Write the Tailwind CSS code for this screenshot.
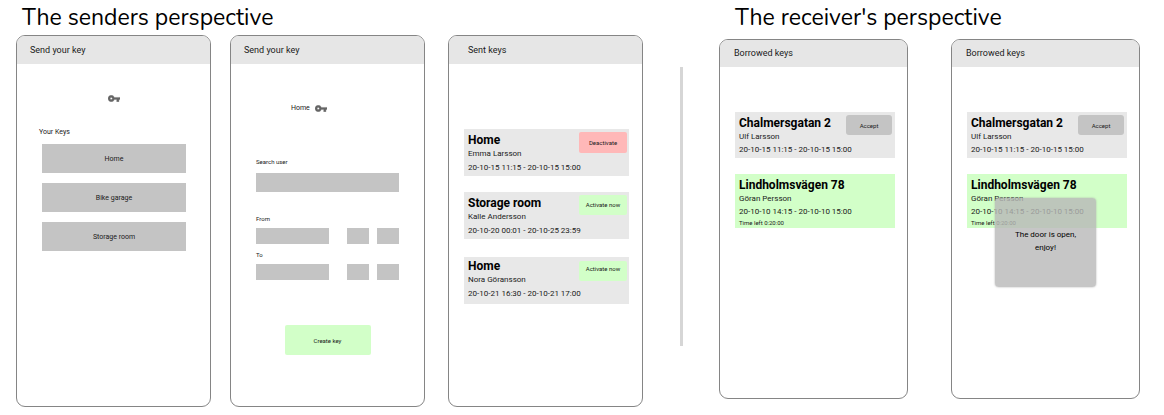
<!DOCTYPE html>
<html lang="en">
<head>
<meta charset="utf-8">
<meta name="viewport" content="width=device-width, initial-scale=1">
<title>Key sharing wireframes</title>
<script src="https://cdn.jsdelivr.net/npm/@tailwindcss/browser@4"></script>
</head>
<body class="bg-white font-['Roboto',sans-serif] text-[8px] text-[#1a1a1a]">
<svg class="hidden" aria-hidden="true"><symbol id="key" viewBox="1 6 22 12"><path fill="currentColor" stroke="currentColor" stroke-width=".6" d="M12.65 10A5.99 5.99 0 0 0 7 6c-3.31 0-6 2.69-6 6s2.69 6 6 6a5.99 5.99 0 0 0 5.65-4H17v4h4v-4h2v-4H12.65zM7 14c-1.1 0-2-.9-2-2s.9-2 2-2 2 .9 2 2-.9 2-2 2z"/></symbol></svg>
<main class="flex items-start pl-4 pr-6">

  <section class="min-w-0 flex-[627]">
    <h1 class="pl-[6px] font-['Nunito','Open_Sans',sans-serif] text-[23px] leading-[35px] text-black whitespace-nowrap">The senders perspective</h1>
    <div class="flex gap-[19px]">

      <article class="min-h-[372px] min-w-0 flex-1 overflow-hidden rounded-[9px] border border-[#858585]">
        <h2 class="bg-[#e6e6e6] pl-[13px] text-[9px] leading-[28px]">Send your key</h2>
        <div class="pt-[31px] pr-6 pl-[25px]">
          <svg class="mx-auto h-[7px] w-[12px] text-[#666]" aria-hidden="true"><use href="#key"/></svg>
          <h3 class="-ml-[3px] pt-[25px] text-[7px] leading-[10px]">Your Keys</h3>
          <div class="flex flex-col gap-[10px] pt-[7px]">
            <button class="h-[29px] bg-[#c4c4c4] pt-px text-[7px]">Home</button>
            <button class="h-[29px] bg-[#c4c4c4] pt-px text-[7px]">Bike garage</button>
            <button class="h-[29px] bg-[#c4c4c4] pt-px text-[7px]">Storage room</button>
          </div>
        </div>
      </article>

      <article class="min-h-[372px] min-w-0 flex-1 overflow-hidden rounded-[9px] border border-[#858585]">
        <h2 class="bg-[#e6e6e6] pl-[13px] text-[9px] leading-[28px]">Send your key</h2>
        <form class="px-[25px] pt-[39px]">
          <p class="flex items-center gap-[5px] pl-[35px] text-[7px] leading-[10px]">Home
            <svg class="h-[7px] w-[12px] text-[#666]" aria-hidden="true"><use href="#key"/></svg>
          </p>
          <label for="user" class="block pt-[44px] text-[6px] leading-[10px]">Search user</label>
          <input id="user" type="text" class="mt-[6px] block h-[19px] w-full bg-[#c4c4c4] px-1">
          <label for="from" class="block pt-[22px] text-[6px] leading-[10px]">From</label>
          <div class="mt-1 flex h-4">
            <input id="from" type="text" class="min-w-0 flex-1 bg-[#c4c4c4] px-1">
            <input type="text" aria-label="From hour" class="ml-[18px] w-[22px] bg-[#c4c4c4]">
            <input type="text" aria-label="From minute" class="ml-2 w-[22px] bg-[#c4c4c4]">
          </div>
          <label for="to" class="block pt-[6px] text-[6px] leading-[10px]">To</label>
          <div class="mt-1 flex h-4">
            <input id="to" type="text" class="min-w-0 flex-1 bg-[#c4c4c4] px-1">
            <input type="text" aria-label="To hour" class="ml-[18px] w-[22px] bg-[#c4c4c4]">
            <input type="text" aria-label="To minute" class="ml-2 w-[22px] bg-[#c4c4c4]">
          </div>
          <button type="button" class="mx-auto mt-[45px] block h-[30px] w-[86px] rounded-[2px] bg-[#d2ffc8] text-[6px]">Create key</button>
        </form>
      </article>

      <article class="ml-1 min-h-[372px] min-w-0 flex-1 overflow-hidden rounded-[9px] border border-[#858585]">
        <h2 class="bg-[#e6e6e6] pl-[19px] text-[9px] leading-[28px]">Sent keys</h2>
        <ul class="pt-[65px] pr-[13px] pl-[15px] leading-[14px] whitespace-nowrap">
          <li class="flex h-[47px] justify-between bg-[#e8e8e8] pr-[2px] pl-1">
            <div class="w-0 pt-1"><h3 class="text-[12px] leading-[14px] font-bold text-black">Home</h3><p>Emma Larsson</p><p>20-10-15 11:15 - 20-10-15 15:00</p></div>
            <button class="mt-[3px] h-[21px] w-12 rounded-[2px] bg-[#ffb8b8] text-[6px]">Deactivate</button>
          </li>
          <li class="mt-4 flex h-[47px] justify-between bg-[#e8e8e8] pr-[2px] pl-1">
            <div class="w-0 pt-1"><h3 class="text-[12px] leading-[14px] font-bold text-black">Storage room</h3><p>Kalle Andersson</p><p>20-10-20 00:01 - 20-10-25 23:59</p></div>
            <button class="mt-[3px] h-[20px] w-12 rounded-[2px] bg-[#d2ffc8] text-[6px]">Activate now</button>
          </li>
          <li class="mt-[18px] flex h-[47px] justify-between bg-[#e8e8e8] pr-[2px] pl-1">
            <div class="w-0 pt-[2px]"><h3 class="text-[12px] leading-[14px] font-bold text-black">Home</h3><p>Nora Göransson</p><p>20-10-21 16:30 - 20-10-21 17:00</p></div>
            <button class="mt-1 h-[20px] w-12 rounded-[2px] bg-[#d2ffc8] pb-[4px] text-[6px]">Activate now</button>
          </li>
        </ul>
      </article>
    </div>
  </section>

  <div class="mt-[67px] mr-9 ml-[37px] h-[279px] w-[3px] bg-[#d6d6d6]" role="separator"></div>

  <section class="min-w-0 flex-[421]">
    <h1 class="pb-1 pl-4 font-['Nunito','Open_Sans',sans-serif] text-[23px] leading-[35px] text-black whitespace-nowrap">The receiver's perspective</h1>
    <div class="flex gap-[43px]">

      <article class="min-h-[360px] min-w-0 flex-1 overflow-hidden rounded-[9px] border border-[#858585]">
        <h2 class="bg-[#e6e6e6] pl-[14px] text-[9px] leading-[27px]">Borrowed keys</h2>
        <ul class="pt-[45px] pr-3 pl-[15px] leading-[13px] whitespace-nowrap">
          <li class="flex h-[46px] justify-between bg-[#e8e8e8] pr-[3px] pl-1">
            <div class="w-0 pt-1"><h3 class="text-[12px] leading-[14px] font-bold text-black">Chalmersgatan 2</h3><p>Ulf Larsson</p><p>20-10-15 11:15 - 20-10-15 15:00</p></div>
            <button class="mt-[3px] h-[20px] w-[46px] rounded-[3px] bg-[#c4c4c4] text-[6px]">Accept</button>
          </li>
          <li class="mt-4 h-[54px] bg-[#d2ffc8] pt-1 pl-1">
            <h3 class="text-[12px] leading-[14px] font-bold text-black">Lindholmsvägen 78</h3><p>Göran Persson</p><p>20-10-10 14:15 - 20-10-10 15:00</p><p class="text-[6px] leading-[10px]">Time left 0:20:00</p>
          </li>
        </ul>
      </article>

      <article class="relative min-h-[360px] min-w-0 flex-1 overflow-hidden rounded-[9px] border border-[#858585]">
        <h2 class="bg-[#e6e6e6] pl-[14px] text-[9px] leading-[27px]">Borrowed keys</h2>
        <ul class="pt-[45px] pr-3 pl-[15px] leading-[13px] whitespace-nowrap">
          <li class="flex h-[46px] justify-between bg-[#e8e8e8] pr-[3px] pl-1">
            <div class="w-0 pt-1"><h3 class="text-[12px] leading-[14px] font-bold text-black">Chalmersgatan 2</h3><p>Ulf Larsson</p><p>20-10-15 11:15 - 20-10-15 15:00</p></div>
            <button class="mt-[3px] h-[20px] w-[46px] rounded-[3px] bg-[#c4c4c4] text-[6px]">Accept</button>
          </li>
          <li class="mt-4 h-[54px] bg-[#d2ffc8] pt-1 pl-1">
            <h3 class="text-[12px] leading-[14px] font-bold text-black">Lindholmsvägen 78</h3><p>Göran Persson</p><p>20-10-10 14:15 - 20-10-10 15:00</p><p class="text-[6px] leading-[10px]">Time left 0:20:00</p>
          </li>
        </ul>
        <div role="status" class="absolute inset-x-0 top-[158px] mx-auto h-[89px] w-[101px] rounded-[4px] bg-[#b8b8b8]/80 pt-[30px] text-center leading-[13px] text-black shadow-[0_0_2px_#aaa]">The door is open,<br>enjoy!</div>
      </article>
    </div>
  </section>
</main>
</body>
</html>
